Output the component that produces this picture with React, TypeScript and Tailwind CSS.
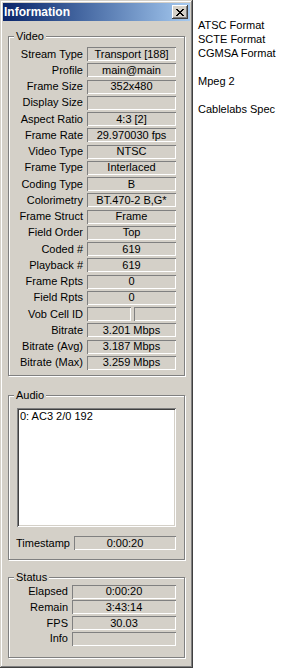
import type { ReactNode } from 'react';

const sunken = 'shadow-[inset_1px_1px_#808080,inset_-1px_-1px_#ffffff]';

const videoRows: [string, string | null][] = [
  ['Stream Type', 'Transport [188]'],
  ['Profile', 'main@main'],
  ['Frame Size', '352x480'],
  ['Display Size', ''],
  ['Aspect Ratio', '4:3 [2]'],
  ['Frame Rate', '29.970030 fps'],
  ['Video Type', 'NTSC'],
  ['Frame Type', 'Interlaced'],
  ['Coding Type', 'B'],
  ['Colorimetry', 'BT.470-2 B,G*'],
  ['Frame Struct', 'Frame'],
  ['Field Order', 'Top'],
  ['Coded #', '619'],
  ['Playback #', '619'],
  ['Frame Rpts', '0'],
  ['Field Rpts', '0'],
  ['Vob Cell ID', null],
  ['Bitrate', '3.201 Mbps'],
  ['Bitrate (Avg)', '3.187 Mbps'],
  ['Bitrate (Max)', '3.259 Mbps'],
];

const statusRows: [string, string][] = [
  ['Elapsed', '0:00:20'],
  ['Remain', '3:43:14'],
  ['FPS', '30.03'],
  ['Info', ''],
];

function Field({ value, className }: { value: string; className: string }) {
  return (
    <div className={`flex h-[14px] items-center justify-center whitespace-nowrap ${sunken} ${className}`}>
      {value}
    </div>
  );
}

function Group({ label, className, children }: { label: string; className: string; children: ReactNode }) {
  return (
    <div
      className={`relative ml-[5px] w-[177px] border border-[#808080] shadow-[inset_1px_1px_#ffffff,1px_1px_#ffffff] ${className}`}
    >
      <span className="absolute left-[5px] top-[-7px] bg-[#d4d0c8] px-[2px] leading-[13px]">{label}</span>
      {children}
    </div>
  );
}

function CloseGlyph() {
  // classic 8x7 caption X
  const px = [
    [0, 0], [1, 0], [6, 0], [7, 0],
    [1, 1], [2, 1], [5, 1], [6, 1],
    [2, 2], [3, 2], [4, 2], [5, 2],
    [3, 3], [4, 3],
    [2, 4], [3, 4], [4, 4], [5, 4],
    [1, 5], [2, 5], [5, 5], [6, 5],
    [0, 6], [1, 6], [6, 6], [7, 6],
  ];
  return (
    <svg width="8" height="7" viewBox="0 0 8 7" shapeRendering="crispEdges">
      {px.map(([x, y]) => (
        <rect key={`${x}-${y}`} x={x} y={y} width="1" height="1" fill="#000" />
      ))}
    </svg>
  );
}

export default function App() {
  return (
    <div className="flex h-[669px] w-[305px] bg-white font-['Liberation_Sans',Arial,sans-serif] text-[11px] leading-none text-black">
      {/* Information window */}
      <div className="h-[668px] w-[193px] shrink-0 bg-[#d4d0c8] p-[3px] shadow-[inset_-1px_-1px_#404040,inset_1px_1px_#d4d0c8,inset_-2px_-2px_#808080,inset_2px_2px_#ffffff]">
        {/* Title bar */}
        <div className="flex h-[18px] items-center bg-gradient-to-r from-[#0a246a] to-[#a6caf0] pl-[1px]">
          <span className="text-[12px] font-bold text-white">Information</span>
          <div className="ml-auto mr-[2px] flex h-[14px] w-[16px] items-center justify-center bg-[#d4d0c8] shadow-[inset_-1px_-1px_#404040,inset_1px_1px_#ffffff,inset_-2px_-2px_#808080,inset_2px_2px_#d4d0c8]">
            <CloseGlyph />
          </div>
        </div>

        {/* Video */}
        <Group label="Video" className="mt-[15px] pb-[4px] pt-[9px]">
          {videoRows.map(([label, value]) => (
            <div key={label} className="flex h-[16.25px] items-center">
              <div className="w-[74px] whitespace-nowrap text-right">{label}</div>
              {value === null ? (
                <div className="ml-[4px] flex w-[89px] gap-[3px]">
                  <Field value="" className="w-[44px]" />
                  <Field value="" className="w-[42px]" />
                </div>
              ) : (
                <Field value={value} className="ml-[4px] w-[89px]" />
              )}
            </div>
          ))}
        </Group>

        {/* Audio */}
        <Group label="Audio" className="mt-[19px] pb-[9px] pt-[12px]">
          <div className="ml-[8px] h-[119px] w-[159px] bg-white p-[2px] shadow-[inset_1px_1px_#808080,inset_-1px_-1px_#ffffff,inset_2px_2px_#404040,inset_-2px_-2px_#d4d0c8]">
            <div className="pl-[1px] leading-[13px]">0: AC3 2/0 192</div>
          </div>
          <div className="mt-[9px] flex items-center">
            <div className="w-[61px] text-right">Timestamp</div>
            <Field value="0:00:20" className="ml-[4px] w-[102px]" />
          </div>
        </Group>

        {/* Status */}
        <Group label="Status" className="mt-[17px] pb-[10px] pt-[6px]">
          {statusRows.map(([label, value]) => (
            <div key={label} className="flex h-[15.67px] items-center">
              <div className="w-[59px] text-right">{label}</div>
              <Field value={value} className="ml-[4px] w-[104px]" />
            </div>
          ))}
        </Group>
      </div>

      {/* Notes beside the window */}
      <div className="flex-1 pl-[5px] pt-[18px] leading-[14px]">
        <div>ATSC Format</div>
        <div>SCTE Format</div>
        <div>CGMSA Format</div>
        <div>&nbsp;</div>
        <div>Mpeg 2</div>
        <div>&nbsp;</div>
        <div>Cablelabs Spec</div>
      </div>
    </div>
  );
}
